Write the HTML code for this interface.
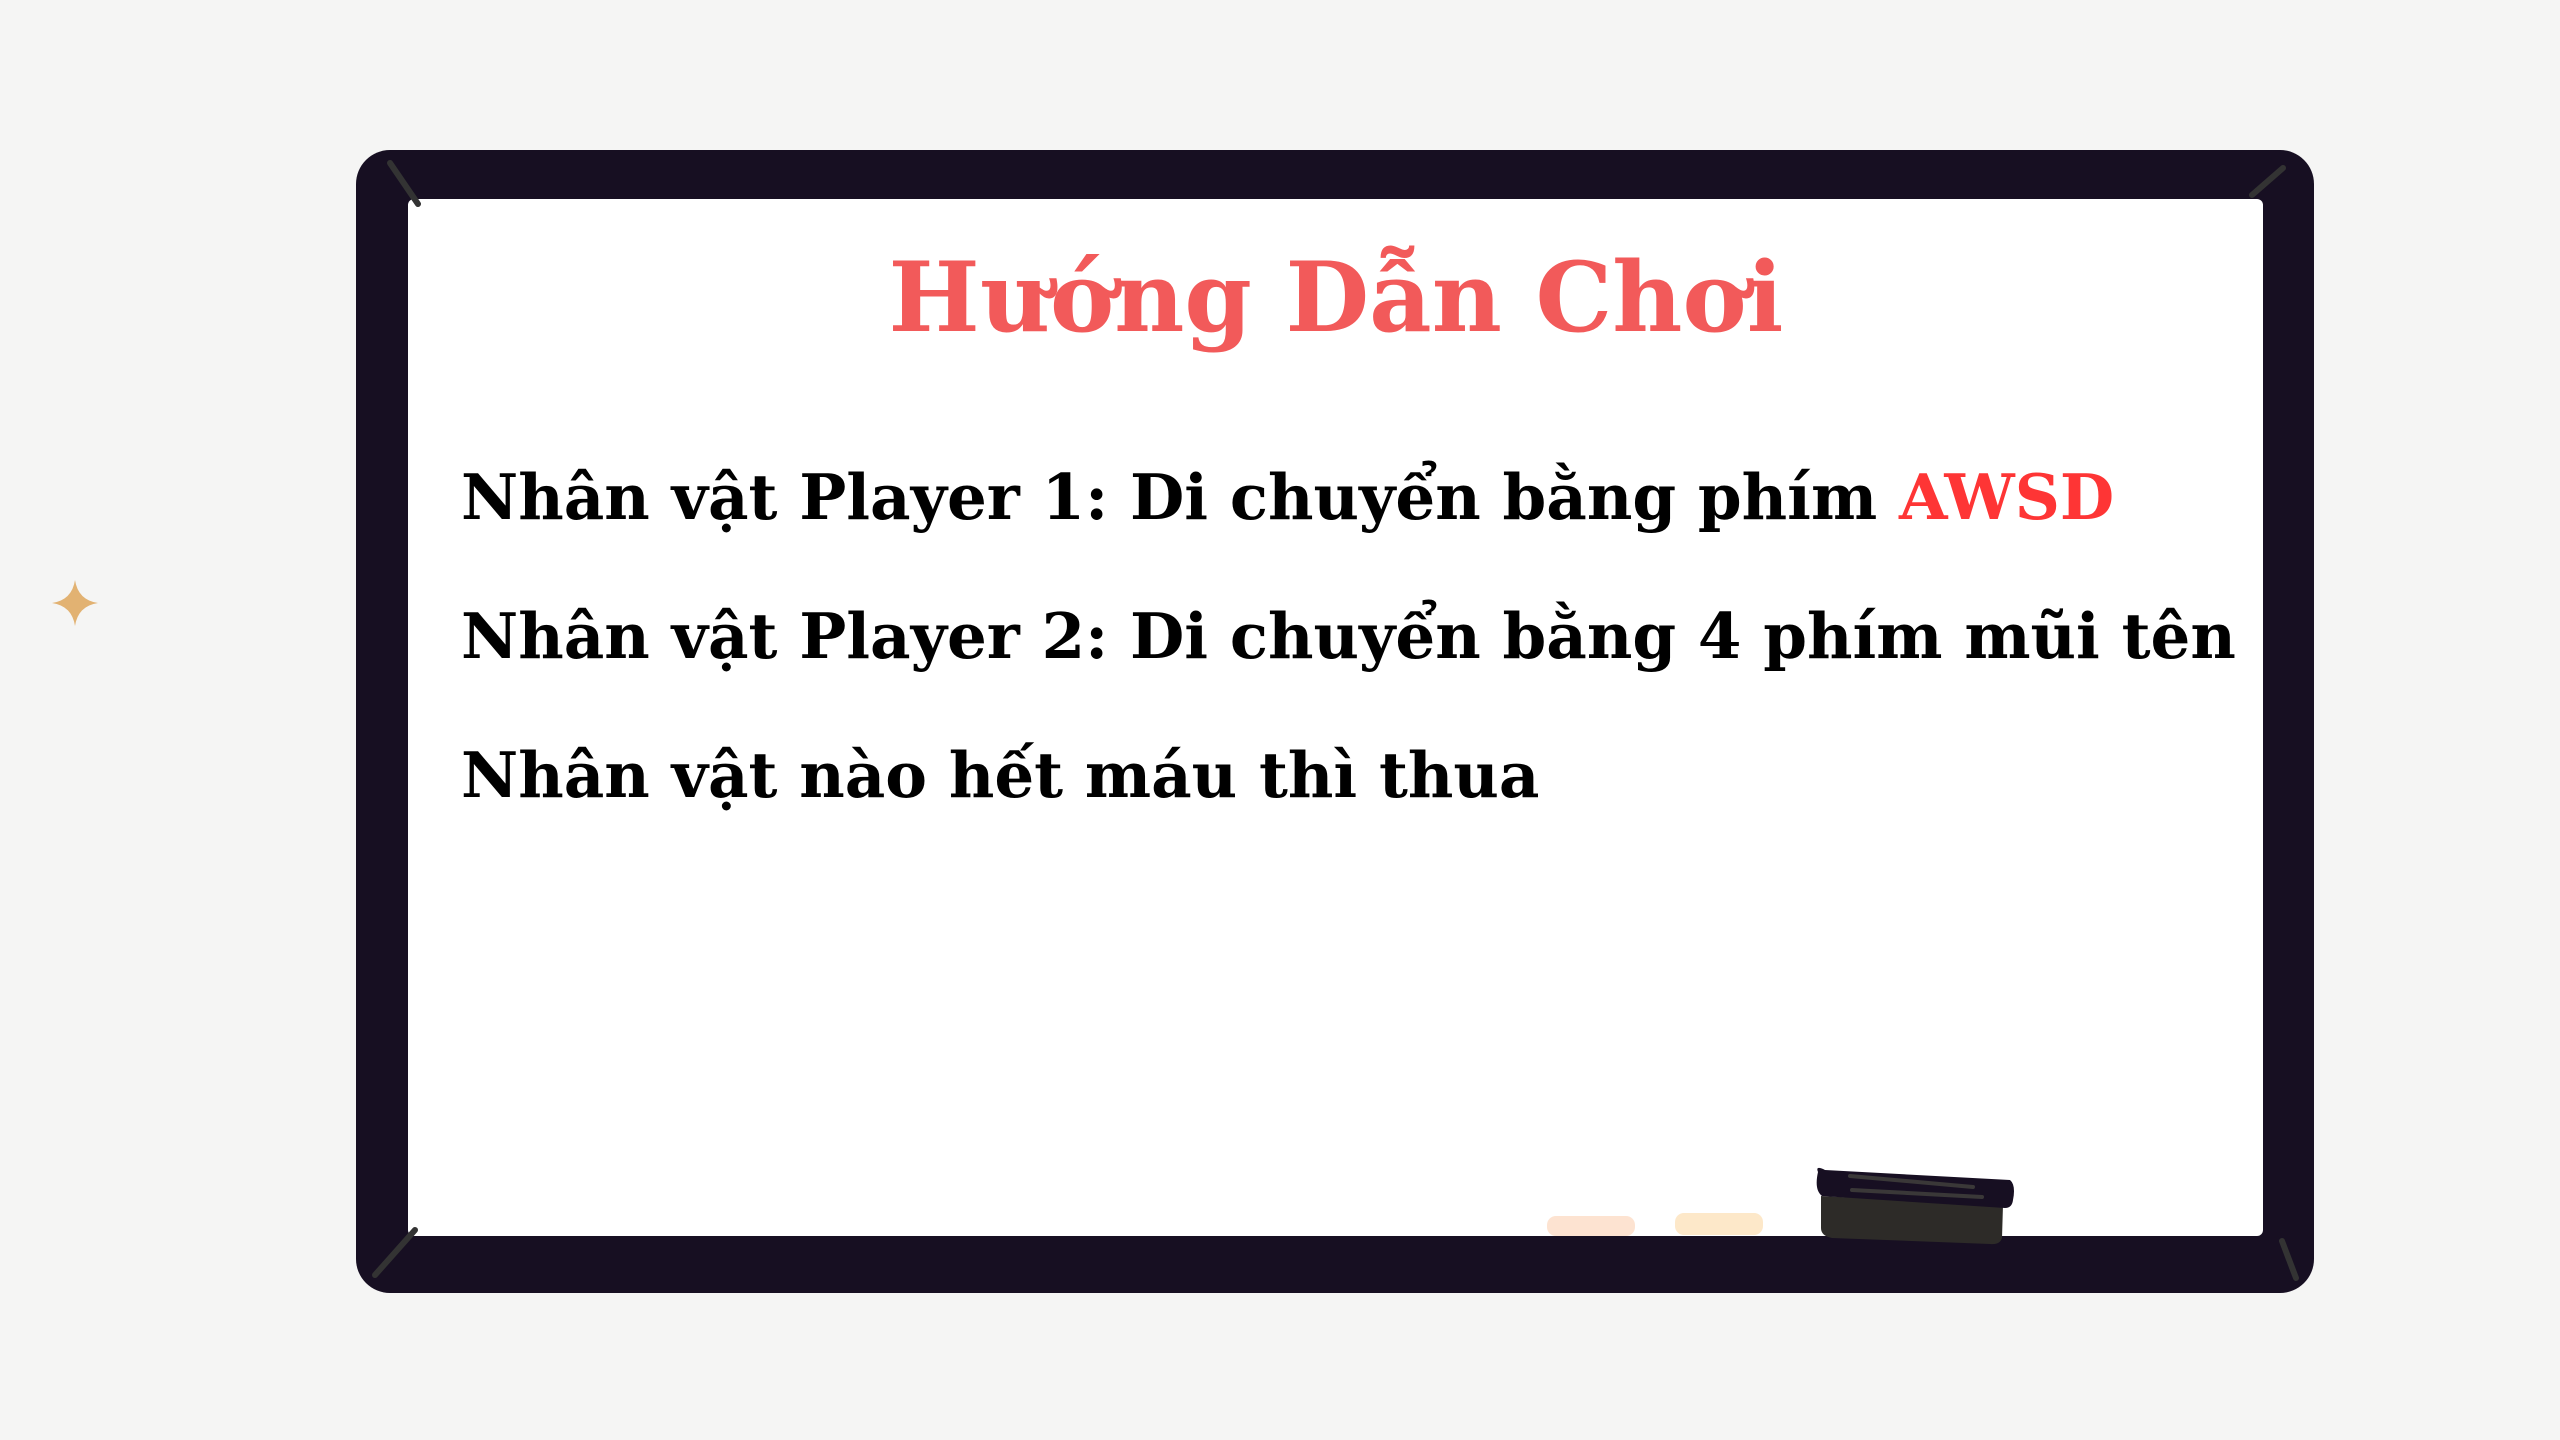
<!DOCTYPE html>
<html><head><meta charset="utf-8"><style>
html,body{margin:0;padding:0;}
body{width:2560px;height:1440px;background:#f5f5f4;position:relative;overflow:hidden;font-family:"DejaVu Serif","Liberation Serif",serif;}
.board{position:absolute;left:356px;top:150px;width:1958px;height:1143px;background:#170f22;border-radius:34px;}
.inner{position:absolute;left:408px;top:199px;width:1855px;height:1037px;background:#fff;border-radius:6px;}
.t{position:absolute;font-weight:bold;line-height:1;white-space:nowrap;}
.title{left:0;width:2560px;text-align:center;top:249px;font-size:96.5px;color:#f25a5a;padding-left:112px;box-sizing:border-box;}
.l{left:461px;font-size:62.6px;color:#000;}
.chalk{position:absolute;border-radius:9px;}
</style></head><body>
<div class="board"></div>
<div class="inner"></div>
<svg style="position:absolute;left:0;top:0" width="2560" height="1440">
<line x1="390" y1="163" x2="418" y2="204" stroke="#333" stroke-width="6" stroke-linecap="round"/>
<line x1="2282" y1="1241" x2="2296" y2="1278" stroke="#333" stroke-width="6" stroke-linecap="round"/>
<line x1="2283" y1="168" x2="2252" y2="195" stroke="#333" stroke-width="6" stroke-linecap="round"/>
<line x1="415" y1="1230" x2="375" y2="1275" stroke="#333" stroke-width="6" stroke-linecap="round"/>
<path d="M75 580 Q78 600 98 603 Q78 606 75 626 Q72 606 52 603 Q72 600 75 580Z" fill="#e2b272"/>
<path d="M1821 1196 L2003 1205 L2002 1238 Q2000 1245 1990 1244 L1832 1238 Q1821 1236 1821 1228Z" fill="#2d2b28"/>
<path d="M1818 1172 Q1815 1165 1825 1170 L2010 1180 Q2016 1185 2013 1200 Q2012 1208 2005 1208 L1822 1196 Q1814 1190 1818 1172Z" fill="#170f22"/>
<path d="M1850 1176 L1973 1187" stroke="#3a3838" stroke-width="4" stroke-linecap="round"/>
<path d="M1852 1190 L1982 1197" stroke="#3a3838" stroke-width="4" stroke-linecap="round"/>
</svg>
<div class="chalk" style="left:1547px;top:1216px;width:88px;height:20px;background:#fde3d1"></div>
<div class="chalk" style="left:1675px;top:1213px;width:88px;height:22px;background:#fde8c9"></div>
<div class="t title">Hướng Dẫn Chơi</div>
<div class="t l" style="top:466px">Nhân vật Player 1: Di chuyển bằng phím <span style="color:#fe3535">AWSD</span></div>
<div class="t l" style="top:605px">Nhân vật Player 2: Di chuyển bằng 4 phím mũi tên</div>
<div class="t l" style="top:744px">Nhân vật nào hết máu thì thua</div>
</body></html>
